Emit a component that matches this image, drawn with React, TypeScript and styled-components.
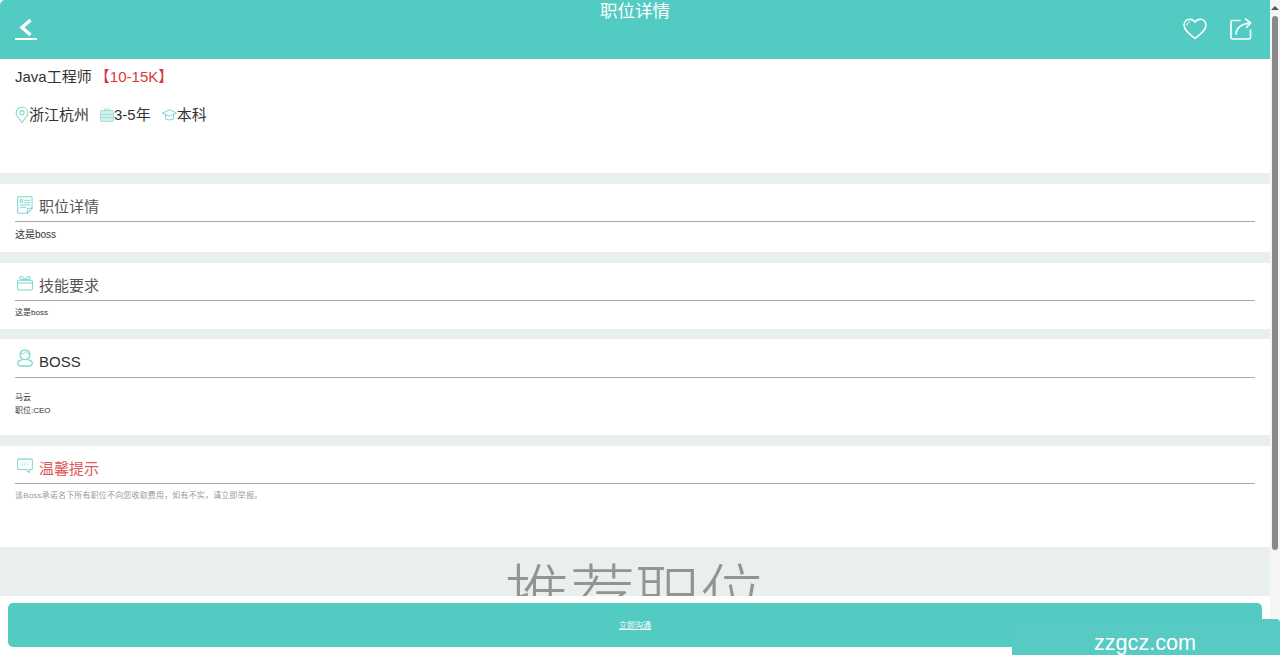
import React from "react";
import styled, { createGlobalStyle } from "styled-components";

const Global = createGlobalStyle`
  html, body { margin: 0; padding: 0; height: 100%; overflow: hidden; background: #fff; }
  body { font-family: "Liberation Sans", "Noto Sans CJK SC", sans-serif; }
  * { box-sizing: border-box; }
`;

const Shell = styled.div`
  display: flex;
  height: 100vh;
  overflow: hidden;
  position: relative;
`;
const Page = styled.main`
  flex: 1;
  min-width: 0;
  overflow: hidden;
`;
const Scrollbar = styled.aside`
  width: 10px;
  background: #f5f5f5;
  display: flex;
  flex-direction: column;
  align-items: center;
  padding-top: 6px;
  gap: 6px;
`;
const ArrowUp = styled.div`
  width: 0;
  height: 0;
  border-left: 4px solid transparent;
  border-right: 4px solid transparent;
  border-bottom: 4px solid #555;
`;
const Thumb = styled.div`
  width: 6px;
  height: 534px;
  border-radius: 3px;
  background: #8a8a8a;
`;
const Header = styled.header`
  height: 59px;
  background: #52cbc3;
  border-top-left-radius: 5px;
  display: flex;
  justify-content: space-between;
  align-items: flex-start;
  padding: 17px 18px 0 15px;
  position: relative;
`;
const HeaderTitle = styled.h1`
  position: absolute;
  left: 0;
  right: 0;
  top: 1px;
  margin: 0;
  text-align: center;
  font-size: 17.5px;
  line-height: 21px;
  font-weight: 400;
  color: #fff;
`;
const HeaderActions = styled.div`
  display: flex;
  gap: 23px;
  align-items: center;
  padding-top: 1px;
`;
const IconSlot = styled.svg`
  display: block;
  flex: none;
  fill: none;
  stroke-linecap: round;
  stroke-linejoin: round;
`;
const JobInfo = styled.section`
  height: 114px;
  padding: 9px 15px 0;
  background: #fff;
`;
const JobTitle = styled.div`
  font-size: 15px;
  line-height: 18px;
  color: #333;
`;
const Salary = styled.span`
  color: #d8393b;
  margin-left: -1px;
`;
const Facts = styled.div`
  display: flex;
  margin-top: 19px;
  gap: 11px;
  align-items: center;
`;
const Fact = styled.div`
  display: flex;
  align-items: center;
  font-size: 15px;
  line-height: 20px;
  color: #333;
`;
const Divider = styled.div<{ $h: number }>`
  height: ${(p) => p.$h}px;
  background: #e8efee;
`;
const Block = styled.section<{ $h: number }>`
  height: ${(p) => p.$h}px;
  padding: 0 15px;
  background: #fff;
`;
const BlockHead = styled.div<{ $h: number; $color: string; $pb?: number }>`
  height: ${(p) => p.$h}px;
  border-bottom: 1px solid #a8a8a8;
  display: flex;
  align-items: flex-end;
  gap: 6px;
  font-size: 15px;
  line-height: 18px;
  padding-bottom: ${(p) => p.$pb ?? 5}px;
  color: ${(p) => p.$color};
`;
const HeadIcon = styled.span<{ $mt: number }>`
  align-self: flex-start;
  margin-top: ${(p) => p.$mt}px;
  margin-left: 2px;
`;
const BodyText = styled.div<{ $size: number; $mt: number; $color?: string; $ls?: number }>`
  font-size: ${(p) => p.$size}px;
  line-height: 13px;
  margin-top: ${(p) => p.$mt}px;
  letter-spacing: ${(p) => p.$ls ?? 0}px;
  color: ${(p) => p.$color ?? "#333"};
`;
const Recommend = styled.section`
  height: 49px;
  overflow: hidden;
  background: #e8efee;
  text-align: center;
  font-size: 65px;
  line-height: 98px;
  color: #939393;
  font-weight: 300;
`;
const Footer = styled.footer`
  position: absolute;
  left: 0;
  right: 10px;
  bottom: 0;
  height: 59px;
  background: #fff;
  padding: 7px 8px 8px;
`;
const Contact = styled.a`
  display: flex;
  height: 44px;
  align-items: center;
  justify-content: center;
  background: #52cbc3;
  border-radius: 5px;
  padding-bottom: 2px;
  color: #fff;
  font-size: 8px;
  text-decoration: underline;
`;
const Watermark = styled.div`
  position: absolute;
  right: 0;
  bottom: 0;
  width: 268px;
  height: 36px;
  border-radius: 4px 4px 0 0;
  background: #56cac3;
  color: #fff;
  font-size: 21.6px;
  line-height: 47px;
  text-align: center;
  padding-right: 2px;
  overflow: hidden;
`;

const T = "#7fd6cf";
const Pale = "#a3e0db";

const Back = () => (
  <IconSlot width="22" height="24" viewBox="0 0 22 24" stroke="#fff">
    <path d="M15.5 3 L7 10.5 L15.5 18" strokeWidth="3.4" strokeLinecap="butt" strokeLinejoin="miter" />
    <path d="M0.5 22 H21.5" strokeWidth="2" />
  </IconSlot>
);
const Heart = () => (
  <IconSlot width="24" height="22" viewBox="0 0 24 22" stroke="#fff" strokeWidth="1.5">
    <path d="M12 20.5 C7 16.5 1 12.5 1 7 C1 3.5 3.7 1.2 6.6 1.2 C8.8 1.2 10.8 2.2 12 4.2 C13.2 2.2 15.2 1.2 17.4 1.2 C20.3 1.2 23 3.5 23 7 C23 12.5 17 16.5 12 20.5 Z" />
    <path d="M4 7 C4 5.3 5.2 4 6.8 3.8" strokeWidth="1" />
  </IconSlot>
);
const Share = () => (
  <IconSlot width="22" height="22" viewBox="0 0 22 22" stroke="#fff" strokeWidth="1.6">
    <path d="M10 2.5 H2.5 Q1 2.5 1 4 V19.5 Q1 21 2.5 21 H19 Q20.5 21 20.5 19.5 V12" />
    <path d="M6 16 C6.5 10 10.5 6 20 5" />
    <path d="M15.5 1 L20.7 5 L16.5 9.5" />
  </IconSlot>
);
const Pin = () => (
  <IconSlot width="14" height="18" viewBox="0 0 15 18" stroke={T} strokeWidth="1.1">
    <path d="M7.5 17 C4.5 13 1.2 10 1.2 6.5 C1.2 3 4 0.8 7.5 0.8 C11 0.8 13.8 3 13.8 6.5 C13.8 10 10.5 13 7.5 17 Z" />
    <circle cx="7.5" cy="6.5" r="2.2" />
  </IconSlot>
);
const Case = () => (
  <IconSlot width="14" height="14" viewBox="0 0 14 14" stroke={Pale} strokeWidth="1">
    <rect x="0.5" y="2.5" width="13" height="11" rx="1.5" fill="#d3f0ed" />
    <path d="M4.5 2.5 V1 H9.5 V2.5 M0.5 6.5 H13.5 M0.5 9.5 H13.5" />
  </IconSlot>
);
const Cap = () => (
  <IconSlot width="15" height="12" viewBox="0 0 15 12" stroke={T} strokeWidth="1">
    <path d="M0.6 4 L7.5 0.8 L14.4 4 L7.5 7 Z" />
    <path d="M3.5 5.5 V10 Q7.5 12 11.5 10 V5.5" />
  </IconSlot>
);
const Doc = () => (
  <IconSlot width="16" height="18" viewBox="0 0 17 19" stroke={T} strokeWidth="1.1">
    <path d="M1.5 0.7 H15 Q16 0.7 16 1.7 V13 L11 18.3 H1.5 Q0.7 18.3 0.7 17.4 V1.5 Q0.7 0.7 1.5 0.7 Z" />
    <path d="M16 13 H12 Q11 13 11 14 V18.3" />
    <rect x="3.5" y="4" width="2.5" height="2.5" />
    <path d="M8 4.5 H13.5 M8 7 H13.5 M3.5 9.5 H13.5 M3.5 12 H9" />
  </IconSlot>
);
const Gift = () => (
  <IconSlot width="16" height="16" viewBox="0 0 17 16" stroke={T} strokeWidth="1.1">
    <rect x="0.6" y="5" width="15.8" height="10.4" rx="1.5" />
    <path d="M0.6 8 H16.4" />
    <path d="M8.5 4.8 C6.5 1 3.5 0 3 2 C2.6 3.6 5 4.8 8.5 4.8 C12 4.8 14.4 3.6 14 2 C13.5 0 10.5 1 8.5 4.8 Z" />
  </IconSlot>
);
const Person = () => (
  <IconSlot width="16" height="18" viewBox="0 0 17 19" stroke={T} strokeWidth="1.4">
    <circle cx="8.5" cy="6" r="5.2" />
    <path d="M3.6 5 C6 5.5 8 4.5 9.5 2.5 C10.5 4.5 12 5.2 13.6 5" strokeWidth="1" />
    <path d="M5 11.5 C2 12 0.8 13.5 0.8 15 C0.8 17 2.5 18 4.5 18 H12.5 C14.5 18 16.2 17 16.2 15 C16.2 13.5 15 12 12 11.5" />
  </IconSlot>
);
const Chat = () => (
  <IconSlot width="16" height="16" viewBox="0 0 17 16" stroke={T} strokeWidth="1.1">
    <path d="M1.8 0.7 H15.2 Q16.3 0.7 16.3 1.8 V10.7 Q16.3 11.8 15.2 11.8 H13 V15 L10 11.8 H1.8 Q0.7 11.8 0.7 10.7 V1.8 Q0.7 0.7 1.8 0.7 Z" />
    <path d="M5.5 6 H5.7 M8.4 6 H8.6 M11.3 6 H11.5" strokeWidth="1.2" />
  </IconSlot>
);

export default function App() {
  return (
    <Shell>
      <Global />
      <Page>
        <Header>
          <Back />
          <HeaderTitle>职位详情</HeaderTitle>
          <HeaderActions>
            <Heart />
            <Share />
          </HeaderActions>
        </Header>
        <JobInfo>
          <JobTitle>
            Java工程师 <Salary>【10-15K】</Salary>
          </JobTitle>
          <Facts>
            <Fact><Pin />浙江杭州</Fact>
            <Fact><Case />3-5年</Fact>
            <Fact><Cap />本科</Fact>
          </Facts>
        </JobInfo>
        <Divider $h={11} />
        <Block $h={68}>
          <BlockHead $h={38} $color="#555">
            <HeadIcon $mt={12}><Doc /></HeadIcon>职位详情
          </BlockHead>
          <BodyText $size={10} $mt={6}>这是boss</BodyText>
        </Block>
        <Divider $h={11} />
        <Block $h={66}>
          <BlockHead $h={38} $color="#555">
            <HeadIcon $mt={12}><Gift /></HeadIcon>技能要求
          </BlockHead>
          <BodyText $size={8} $mt={5}>这是boss</BodyText>
        </Block>
        <Divider $h={10} />
        <Block $h={96}>
          <BlockHead $h={39} $color="#333" $pb={6}>
            <HeadIcon $mt={10}><Person /></HeadIcon>BOSS
          </BlockHead>
          <BodyText $size={8} $mt={13}>马云</BodyText>
          <BodyText $size={8} $mt={0}>职位:CEO</BodyText>
        </Block>
        <Divider $h={11} />
        <Block $h={101}>
          <BlockHead $h={38} $color="#e0575b">
            <HeadIcon $mt={12}><Chat /></HeadIcon>温馨提示
          </BlockHead>
          <BodyText $size={8} $mt={5} $color="#999" $ls={0.17}>该Boss承诺名下所有职位不向您收取费用，如有不实，请立即举报。</BodyText>
        </Block>
        <Recommend>推荐职位</Recommend>
      </Page>
      <Scrollbar>
        <ArrowUp />
        <Thumb />
      </Scrollbar>
      <Footer>
        <Contact>立即沟通</Contact>
      </Footer>
      <Watermark>zzgcz.com</Watermark>
    </Shell>
  );
}
